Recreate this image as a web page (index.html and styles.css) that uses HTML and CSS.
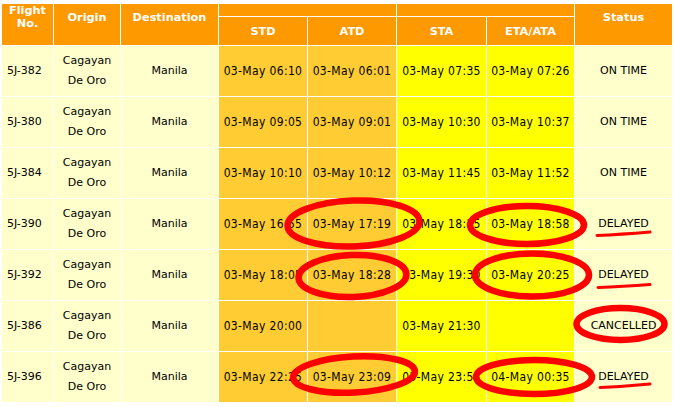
FILE: index.html
```html
<!DOCTYPE html>
<html>
<head>
<meta charset="utf-8">
<link rel="stylesheet" href="styles.css">
</head>
<body>
<div class="page">
<table class="flights">
<colgroup>
<col class="c-no"><col class="c-org"><col class="c-dst"><col class="c-std"><col class="c-atd"><col class="c-sta"><col class="c-eta"><col class="c-st">
</colgroup>
<thead>
<tr class="grp">
<th rowspan="2" class="main">Flight<br>No.</th>
<th rowspan="2" class="main">Origin</th>
<th rowspan="2" class="main">Destination</th>
<th colspan="2"></th>
<th colspan="2"></th>
<th rowspan="2" class="main">Status</th>
</tr>
<tr class="sub">
<th>STD</th><th>ATD</th><th>STA</th><th>ETA/ATA</th>
</tr>
</thead>
<tbody>
<tr><td>5J-382</td><td>Cagayan<br>De Oro</td><td>Manila</td><td class="dep t">03-May 06:10</td><td class="dep t">03-May 06:01</td><td class="arr t">03-May 07:35</td><td class="arr t">03-May 07:26</td><td>ON TIME</td></tr>
<tr><td>5J-380</td><td>Cagayan<br>De Oro</td><td>Manila</td><td class="dep t">03-May 09:05</td><td class="dep t">03-May 09:01</td><td class="arr t">03-May 10:30</td><td class="arr t">03-May 10:37</td><td>ON TIME</td></tr>
<tr><td>5J-384</td><td>Cagayan<br>De Oro</td><td>Manila</td><td class="dep t">03-May 10:10</td><td class="dep t">03-May 10:12</td><td class="arr t">03-May 11:45</td><td class="arr t">03-May 11:52</td><td>ON TIME</td></tr>
<tr><td>5J-390</td><td>Cagayan<br>De Oro</td><td>Manila</td><td class="dep t">03-May 16:55</td><td class="dep t">03-May 17:19</td><td class="arr t">03-May 18:25</td><td class="arr t">03-May 18:58</td><td>DELAYED</td></tr>
<tr><td>5J-392</td><td>Cagayan<br>De Oro</td><td>Manila</td><td class="dep t">03-May 18:05</td><td class="dep t">03-May 18:28</td><td class="arr t">03-May 19:30</td><td class="arr t">03-May 20:25</td><td>DELAYED</td></tr>
<tr><td>5J-386</td><td>Cagayan<br>De Oro</td><td>Manila</td><td class="dep t">03-May 20:00</td><td class="dep t"></td><td class="arr t">03-May 21:30</td><td class="arr t"></td><td>CANCELLED</td></tr>
<tr><td>5J-396</td><td>Cagayan<br>De Oro</td><td>Manila</td><td class="dep t">03-May 22:25</td><td class="dep t">03-May 23:09</td><td class="arr t">03-May 23:55</td><td class="arr t">04-May 00:35</td><td>DELAYED</td></tr>
</tbody>
</table>
<svg class="marks" width="675" height="407" viewBox="0 0 675 407">
<g fill="none" stroke="#ff0000" stroke-width="6.5">
<ellipse cx="353.5" cy="223.5" rx="66" ry="23" transform="rotate(-2 353.5 223.5)"/>
<ellipse cx="527" cy="225" rx="57" ry="19"/>
<ellipse cx="352.5" cy="276" rx="54" ry="21" transform="rotate(-2 352.5 276)"/>
<ellipse cx="532" cy="275" rx="57" ry="21.5"/>
<ellipse cx="620.5" cy="324" rx="44" ry="16"/>
<ellipse cx="354" cy="374.5" rx="61" ry="18" transform="rotate(-3 354 374.5)"/>
<ellipse cx="534" cy="377" rx="58" ry="17"/>
</g>
<g fill="none" stroke="#ff0000" stroke-width="3" stroke-linecap="round">
<path d="M597 235.5 Q620 234.5 650 232"/>
<path d="M598 287.5 Q622 286.5 650 284.5"/>
<path d="M600 387.5 Q624 386.5 650 384"/>
</g>
</svg>
</div>
</body>
</html>
```
FILE: styles.css
```css
html, body {
  margin: 0;
  padding: 0;
  background: #ffffff;
}
.page {
  position: relative;
  width: 675px;
  height: 407px;
  overflow: hidden;
  padding: 3px 0 0 1px;
  box-sizing: border-box;
}
.flights {
  border-collapse: separate;
  border-spacing: 1px;
  table-layout: fixed;
  width: 672px;
  background: #ffffff;
  font-family: "DejaVu Sans", Verdana, sans-serif;
  font-size: 11px;
  color: #000000;
}
.c-no { width: 51px; }
.c-org { width: 66px; }
.c-dst { width: 97px; }
.c-std { width: 88px; }
.c-atd { width: 88px; }
.c-sta { width: 89px; }
.c-eta { width: 87px; }
.c-st { width: 97px; }
.flights th {
  background: #ff9900;
  color: #ffffff;
  font-weight: bold;
  font-size: 11.3px;
  line-height: 13px;
  padding: 0;
  text-align: center;
}
.grp th {
  height: 12px;
}
.grp th.main {
  vertical-align: middle;
  padding-bottom: 15px;
}
.sub th {
  height: 28px;
  vertical-align: middle;
}
.flights td {
  background: #ffffcc;
  height: 40px;
  padding: 5px 0;
  line-height: 20px;
  text-align: center;
  vertical-align: middle;
  white-space: nowrap;
}
.flights td:first-child {
  text-align: left;
  padding-left: 5px;
}
.flights td.dep {
  background: #ffcc33;
}
.flights td.arr {
  background: #ffff00;
}
.flights td.t {
  font-family: "DejaVu Sans Condensed", "Liberation Sans", sans-serif;
  font-size: 12px;
  letter-spacing: 0.35px;
}
.marks {
  position: absolute;
  top: 0;
  left: 0;
}
```
